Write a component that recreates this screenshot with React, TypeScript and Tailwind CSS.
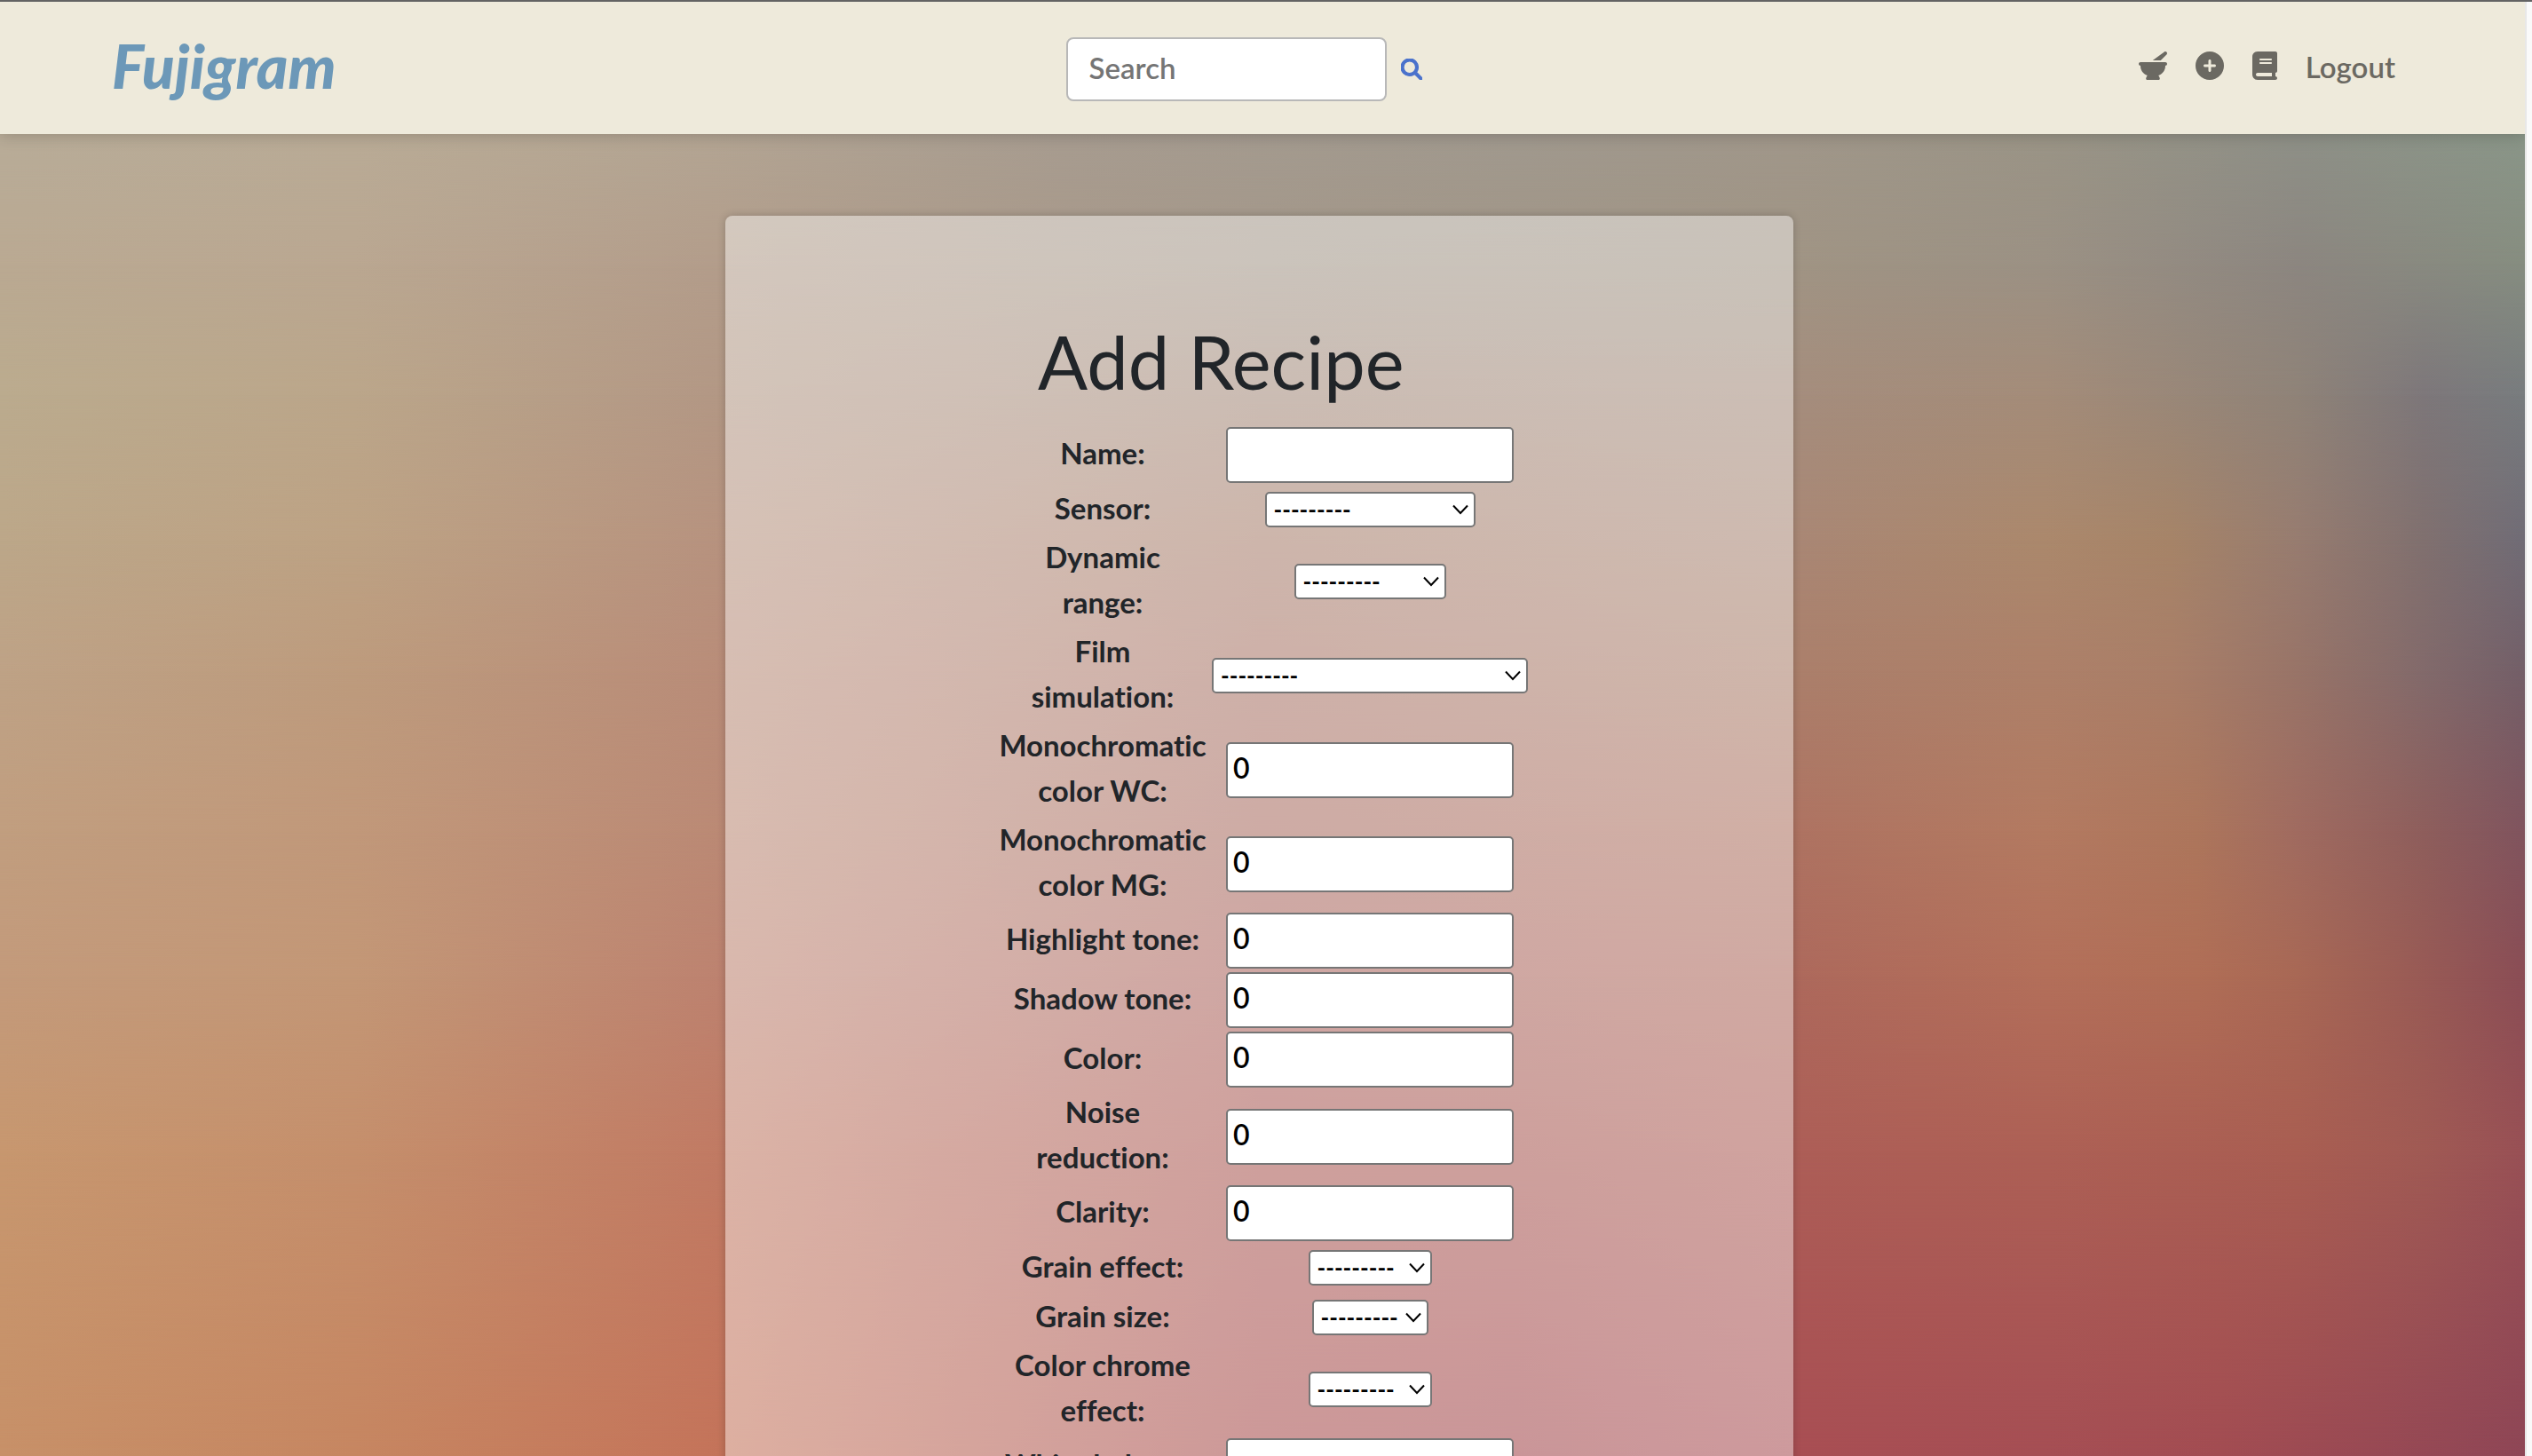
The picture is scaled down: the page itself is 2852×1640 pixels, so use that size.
import { useId } from "react";
import { FaBook, FaCirclePlus, FaMagnifyingGlass, FaMortarPestle } from "react-icons/fa6";

type Field =
  | { label: string; kind: "input"; value: string }
  | { label: string; kind: "select"; width: string };

const fields: Field[] = [
  { label: "Name:", kind: "input", value: "" },
  { label: "Sensor:", kind: "select", width: "w-[237px]" },
  { label: "Dynamic\nrange:", kind: "select", width: "w-[171px]" },
  { label: "Film\nsimulation:", kind: "select", width: "w-[356px]" },
  { label: "Monochromatic\ncolor WC:", kind: "input", value: "0" },
  { label: "Monochromatic\ncolor MG:", kind: "input", value: "0" },
  { label: "Highlight tone:", kind: "input", value: "0" },
  { label: "Shadow tone:", kind: "input", value: "0" },
  { label: "Color:", kind: "input", value: "0" },
  { label: "Noise\nreduction:", kind: "input", value: "0" },
  { label: "Clarity:", kind: "input", value: "0" },
  { label: "Grain effect:", kind: "select", width: "w-[139px]" },
  { label: "Grain size:", kind: "select", width: "w-[131px]" },
  { label: "Color chrome\neffect:", kind: "select", width: "w-[139px]" },
  { label: "White balance:", kind: "input", value: "" },
];

/* Horizontal colour bands, each one fading in over the band above it. */
function Backdrop() {
  return (
    <div aria-hidden="true" className="pointer-events-none absolute inset-0 -z-10">
      <div className="absolute inset-0 bg-[linear-gradient(90deg,#b8ac98_0%,#b9ab96_14%,#b3a593_28%,#a79c90_42%,#a0998e_60%,#a0978a_71%,#9a9486_81%,#8e9087_91%,#8a9688_100%)]" />
      <div className="absolute inset-0 bg-[linear-gradient(90deg,#baa992_0%,#baa791_14%,#b39d8b_28%,#a49789_50%,#a09484_71%,#9b9184_81%,#8c8680_91%,#868d80_100%)] [mask-image:linear-gradient(to_bottom,transparent_9%,black_18%)]" />
      <div className="absolute inset-0 bg-[linear-gradient(90deg,#bbab8e_0%,#bba68a_14%,#b39885_28%,#a48a7a_50%,#a58d7d_71%,#a48c79_81%,#8f8378_91%,#7d777a_96%,#787c7e_100%)] [mask-image:linear-gradient(to_bottom,transparent_18%,black_27%)]" />
      <div className="absolute inset-0 bg-[linear-gradient(90deg,#bca789_0%,#bda284_14%,#b7937f_28%,#a87e6c_50%,#a98775_71%,#ab886c_81%,#a68468_86%,#977c70_91%,#80706f_96%,#706c76_100%)] [mask-image:linear-gradient(to_bottom,transparent_27%,black_37%)]" />
      <div className="absolute inset-0 bg-[linear-gradient(90deg,#bea286_0%,#bd9b7d_14%,#b98d79_28%,#a97568_50%,#ab7f6b_71%,#ad8069_81%,#a97e68_86%,#987468_91%,#826a6b_96%,#735f68_100%)] [mask-image:linear-gradient(to_bottom,transparent_37%,black_46%)]" />
      <div className="absolute inset-0 bg-[linear-gradient(90deg,#c19e7f_0%,#c1987a_14%,#bb8a75_28%,#a96c61_50%,#ae7362_71%,#b37a61_81%,#ad765c_87%,#a06b60_91%,#8e5e5c_96%,#80545e_100%)] [mask-image:linear-gradient(to_bottom,transparent_46%,black_57%)]" />
      <div className="absolute inset-0 bg-[linear-gradient(90deg,#c39a7b_0%,#c39776_14%,#bd8370_28%,#aa635d_50%,#ad695c_71%,#b36f5a_81%,#b06e56_87%,#a86855_91%,#985a55_96%,#8a4d55_100%)] [mask-image:linear-gradient(to_bottom,transparent_57%,black_67%)]" />
      <div className="absolute inset-0 bg-[linear-gradient(90deg,#c7976f_0%,#c58f6c_14%,#c17b64_28%,#b66a5b_37%,#aa5853_50%,#a85852_60%,#ad5e57_71%,#ad6055_81%,#a95e52_91%,#a05a54_96%,#985055_100%)] [mask-image:linear-gradient(to_bottom,transparent_67%,black_79%)]" />
      <div className="absolute inset-0 bg-[linear-gradient(90deg,#c79068_0%,#c68661_14%,#c4745a_28%,#b66052_38%,#a64b4b_50%,#a2464b_60%,#a84e53_71%,#a54e54_81%,#a24c52_88%,#8e4656_100%)] [mask-image:linear-gradient(to_bottom,transparent_79%,black_100%)]" />
    </div>
  );
}

function NavBar() {
  return (
    <header className="relative flex h-[149px] shrink-0 items-center bg-[#eeeadb] pr-[146px] pl-[126px] shadow-[0_2px_16px_rgba(0,0,0,0.18)]">
      <div className="flex-1 pb-1.5">
        <a href="#home" className="text-[68px] leading-none font-black text-[#6c98b8] italic">
          Fujigram
        </a>
      </div>
      <form className="mt-0.5 flex items-center gap-4 pr-[22px]" onSubmit={(e) => e.preventDefault()}>
        <input
          type="search"
          aria-label="Search"
          placeholder="Search"
          className="h-[72px] w-[361px] rounded-lg border-2 border-[#b8b8b8] bg-white px-6 pb-1 text-[33px] font-semibold text-[#212529] placeholder:text-[#757575]"
        />
        <button type="submit" aria-label="Submit search" className="text-[#4a72cc]">
          <FaMagnifyingGlass className="size-6 stroke-current stroke-[24px]" />
        </button>
      </form>
      <nav className="flex flex-1 items-center justify-end gap-8 pb-1.5 text-[#6b6962]">
        <a href="#recipes" aria-label="Recipes">
          <FaMortarPestle className="size-8" />
        </a>
        <a href="#add" aria-label="Add recipe">
          <FaCirclePlus className="size-8" />
        </a>
        <a href="#book" aria-label="Recipe book">
          <FaBook className="h-8 w-7" />
        </a>
        <a href="#logout" className="pt-1 text-[33px] leading-none font-semibold">
          Logout
        </a>
      </nav>
    </header>
  );
}

function Row({ field }: { field: Field }) {
  const id = useId();
  return (
    <tr>
      <th scope="row" className="w-[238px] pb-1 text-center text-[33px] leading-[51px] font-bold">
        <label htmlFor={id} className="whitespace-pre [font-variant-ligatures:none]">
          {field.label}
        </label>
      </th>
      {field.kind === "input" ? (
        <td className="p-0.5">
          <input
            id={id}
            type="text"
            defaultValue={field.value}
            className="mx-auto block h-[63px] w-[324px] rounded-[5px] border-2 border-[#767676] bg-white px-1.5 pb-1.5 text-[32px] font-semibold text-black"
          />
        </td>
      ) : (
        <td className="py-2">
          <div className="relative mx-auto w-fit">
            <select
              id={id}
              className={
                "block h-10 appearance-none rounded-[5px] border-2 border-[#767676] bg-white px-2 text-[26px] leading-none font-bold text-black " +
                field.width
              }
            >
              <option>---------</option>
            </select>
            <svg
              viewBox="0 0 18 12"
              className="pointer-events-none absolute top-3.5 right-2 h-3 w-[18px] fill-none stroke-black stroke-2"
            >
              <path d="M1 1.5 L9 10 L17 1.5" />
            </svg>
          </div>
        </td>
      )}
    </tr>
  );
}

export default function App() {
  return (
    <div className="flex h-screen flex-col overflow-hidden border-t-2 border-[#636363] bg-[#fafafa] font-['Lato',sans-serif] text-[#212529]">
      <div className="flex min-h-0 flex-1">
        <div className="relative isolate flex min-w-0 flex-1 flex-col overflow-hidden">
          <Backdrop />
          <NavBar />
          <main className="flex flex-1 justify-center pt-[92px] pr-2">
            <section className="h-max w-[42%] min-w-[1203px] rounded-lg bg-white/43 pt-[116px] pb-24 pl-3 shadow-[0_0_10px_rgba(0,0,0,0.2)]">
              <div className="mx-auto w-[602px]">
                <h1 className="pl-[46px] text-[83px] leading-[96px]">Add Recipe</h1>
                <form className="mt-6">
                  <table className="w-full border-collapse">
                    <tbody>
                      {fields.map((field) => (
                        <Row key={field.label} field={field} />
                      ))}
                    </tbody>
                  </table>
                </form>
              </div>
            </section>
          </main>
        </div>
        <div className="w-2 shrink-0 border-l-2 border-[#e8e8e8] bg-[#fafafa]" />
      </div>
    </div>
  );
}
